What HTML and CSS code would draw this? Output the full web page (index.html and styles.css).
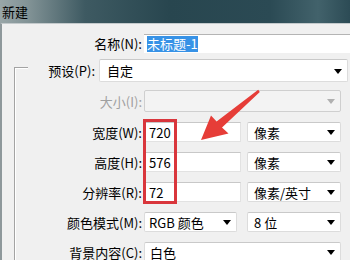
FILE: index.html
```html
<!DOCTYPE html>
<html lang="zh-CN">
<head>
    <meta charset="UTF-8">
    <meta name="viewport" content="width=device-width, initial-scale=1.0">
    <title>新建</title>
    <link rel="stylesheet" href="styles.css">
</head>
<body>
    <div class="titlebar">新建</div>
    <div class="window">
        <div class="row row-name">
            <div class="label">名称(N):</div>
            <div class="input input-name"><span class="selected">未标题-1</span></div>
        </div>
        <div class="group">
            <div class="row row-preset">
                <div class="label label-preset">预设(P):</div>
                <div class="select select-preset">自定<span class="caret"></span></div>
            </div>
            <div class="row row-size">
                <div class="label disabled">大小(I):</div>
                <div class="select select-size"><span class="caret caret-off"></span></div>
            </div>
            <div class="row">
                <div class="label">宽度(W):</div>
                <div class="input input-num">720</div>
                <div class="select select-unit">像素<span class="caret"></span></div>
            </div>
            <div class="row">
                <div class="label">高度(H):</div>
                <div class="input input-num">576</div>
                <div class="select select-unit">像素<span class="caret"></span></div>
            </div>
            <div class="row">
                <div class="label">分辨率(R):</div>
                <div class="input input-num">72</div>
                <div class="select select-unit">像素/英寸<span class="caret"></span></div>
            </div>
            <div class="row">
                <div class="label">颜色模式(M):</div>
                <div class="select select-mode">RGB 颜色<span class="caret"></span></div>
                <div class="select select-unit">8 位<span class="caret"></span></div>
            </div>
            <div class="row row-last">
                <div class="label">背景内容(C):</div>
                <div class="select select-wide">白色<span class="caret"></span></div>
            </div>
        </div>
    </div>

    <!--标注：红框和箭头 -->
    <div class="mark-box"></div>
    <svg class="mark-arrow" width="350" height="260" viewBox="0 0 350 260">
        <polygon fill="#e63d38" points="201,140 211,115.5 216.6,121.4 258.2,89.8 259.8,92 222,127.6 228.5,133.5"/>
    </svg>
</body>
</html>
```

FILE: styles.css
```css
html {
    overflow: hidden;
}

body {
    margin: 0;
    width: 350px;
    height: 260px;
    overflow: hidden;
    background-color: #f0f0f0;
    color: #000000;
    font-family: "Noto Sans CJK SC", "Noto Sans", sans-serif;
    font-size: 13px;
    position: relative;
}

.titlebar {
    height: 23px;
    line-height: 23px;
    padding-left: 2px;
    font-size: 13px;
    background: linear-gradient(90deg, #99a6a8 0, #829396 28px, #3e5a62 85px, #28464f 170px, #2b4a54 270px, #42626b 318px, #2c4b55 350px);
}

.window {
    border-left: 2px solid #8e989b;
    border-top: 1px solid #c4cacc;
    padding-top: 10px;
    height: 226px;
    overflow: hidden;
}

.row {
    display: flex;
    align-items: center;
    height: 20px;
    margin-bottom: 10px;
}

.row-name {
    height: 19px;
    margin-bottom: 6px;
}

.row-preset {
    height: 23px;
    margin-bottom: 8px;
}

.row-size {
    height: 22px;
}

.row-last {
    margin-bottom: 0;
}

.label {
    width: 140px;
    flex-shrink: 0;
    text-align: right;
    margin-right: 2px;
    white-space: nowrap;
}

.label.disabled {
    color: #a0a0a0;
}

.label-preset {
    width: 93px;
    margin-right: 4px;
}

.input {
    background-color: #ffffff;
    border-top: 1px solid #b4b4b4;
    height: 100%;
    box-sizing: border-box;
    padding-left: 4px;
    display: flex;
    align-items: center;
    flex-shrink: 0;
}

.input-name {
    width: 220px;
    padding-left: 3px;
}

.selected {
    background-color: #3792e6;
    color: #ffffff;
    line-height: 16px;
}

.input-num {
    width: 97px;
    border: 1px solid #e2e2e2;
    border-top-color: #c8c8c8;
}

.group {
    position: relative;
}

/* 分组框的线 */
.group::before {
    content: "";
    position: absolute;
    left: 12px;
    top: 8px;
    width: 13px;
    bottom: -30px;
    border-left: 1px solid #a3a3a3;
    border-top: 1px solid #a3a3a3;
    box-shadow: inset 1px 1px 0 #ffffff;
}

.select {
    position: relative;
    background-color: #ffffff;
    border: 1px solid #dcdcdc;
    border-top-color: #c9c9c9;
    border-radius: 2px;
    height: 100%;
    box-sizing: border-box;
    padding-left: 6px;
    display: flex;
    align-items: center;
    flex-shrink: 0;
}

.select-preset {
    width: 249px;
    padding-left: 7px;
}

.select-size {
    width: 197px;
    background-color: #f3f3f3;
    border-color: #cfcfcf;
}

.select-unit {
    width: 94px;
    margin-left: 6px;
}

.select-mode {
    width: 93px;
    margin-right: 4px;
    padding-left: 4px;
}

.select-wide {
    width: 197px;
    padding-left: 5px;
}

.caret {
    position: absolute;
    right: 5px;
    top: 50%;
    margin-top: -2px;
    width: 0;
    height: 0;
    border-left: 4px solid transparent;
    border-right: 4px solid transparent;
    border-top: 5px solid #000000;
}

.caret-off {
    border-top-color: #b0b0b0;
}

.mark-box {
    position: absolute;
    left: 143px;
    top: 119px;
    width: 28px;
    height: 79px;
    border: 3px solid #d9363c;
}

.mark-arrow {
    position: absolute;
    left: 0;
    top: 0;
}
```
